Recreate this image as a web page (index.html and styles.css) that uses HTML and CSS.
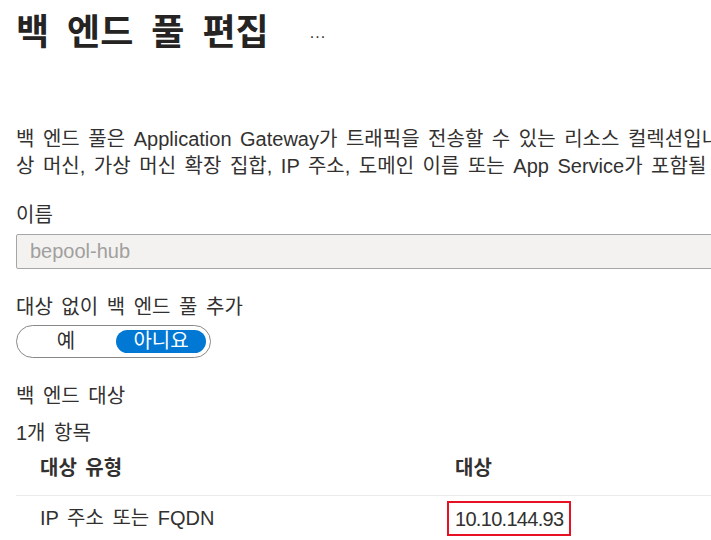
FILE: index.html
```html
<!DOCTYPE html>
<html lang="ko">
<head>
  <meta charset="UTF-8" />
  <title>백 엔드 풀 편집</title>
  <meta name="viewport" content="width=device-width, initial-scale=1" />
  <link rel="stylesheet" href="styles.css">
</head>
<body>
  <div class="pane">
    <div class="pane-header">
      <h1>백 엔드 풀 편집</h1>
      <span class="more">...</span>
    </div>

    <p class="intro">백 엔드 풀은 Application Gateway가 트래픽을 전송할 수 있는 리소스 컬렉션입니다. 백 엔드 풀에는 가<br>상 머신, 가상 머신 확장 집합, IP 주소, 도메인 이름 또는 App Service가 포함될 수 있습니다.</p>

    <div class="field">
      <label class="field-label">이름</label>
      <div class="text-input disabled">bepool-hub</div>
    </div>

    <div class="field field-toggle">
      <label class="field-label">대상 없이 백 엔드 풀 추가</label>
      <div class="toggle">
        <div class="toggle-option">예</div>
        <div class="toggle-option selected">아니요</div>
      </div>
    </div>

    <div class="section-title">백 엔드 대상</div>
    <div class="item-count">1개 항목</div>

    <div class="grid">
      <div class="grid-row grid-head">
        <div class="cell">대상 유형</div>
        <div class="cell">대상</div>
      </div>
      <div class="grid-row">
        <div class="cell">IP 주소 또는 FQDN</div>
        <div class="cell"><span class="highlight">10.10.144.93</span></div>
      </div>
    </div>
  </div>
</body>
</html>
```

FILE: styles.css
```css
:root {
  --text: #323130;
  --muted: #a19f9d;
  --primary: #0078d4;
  --line: #edebe9;
}

body {
  margin: 0;
  padding: 0;
  background: #fff;
  color: var(--text);
  font-family: "Liberation Sans", "Noto Sans CJK KR", sans-serif;
  font-size: 20px;
  word-spacing: 3px;
  overflow: hidden;
}

.pane {
  width: 1000px;
  padding-left: 16px;
}

.pane-header {
  display: flex;
  align-items: center;
  height: 58px;
  padding-top: 4px;
}

.pane-header h1 {
  margin: 0;
  font-size: 36px;
  font-weight: bold;
  word-spacing: 8px;
  line-height: 58px;
  color: #252423;
}

.more {
  margin-left: 41px;
  font-size: 16px;
  letter-spacing: 1px;
  color: var(--text);
}

.intro {
  margin: 64px 0 0;
  line-height: 27px;
  white-space: nowrap;
}

.field {
  margin-top: 22px;
}

.field-toggle {
  margin-top: 25px;
}

.field-label {
  display: block;
  line-height: 27px;
  margin-bottom: 5px;
}

.field-toggle .field-label {
  margin-bottom: 4px;
}

.text-input {
  box-sizing: border-box;
  height: 35px;
  border: 1px solid #a6a6a6;
  border-radius: 2px;
  padding: 0 13px;
  line-height: 33px;
}

.text-input.disabled {
  background: #f3f2f1;
  color: var(--muted);
}

.toggle {
  display: inline-flex;
  gap: 5px;
  padding: 4px;
  border: 1px solid #8a8886;
  border-radius: 17px;
}

.toggle-option {
  width: 90px;
  height: 23px;
  line-height: 23px;
  text-align: center;
  border-radius: 12px;
}

.toggle-option.selected {
  background: var(--primary);
  color: #fff;
}

.section-title {
  margin-top: 25px;
  line-height: 27px;
}

.item-count {
  margin-top: 10px;
  line-height: 27px;
}

.grid-row {
  display: grid;
  grid-template-columns: 415px 1fr;
  align-items: center;
  padding-left: 24px;
  line-height: 27px;
}

.grid-head {
  font-weight: bold;
  padding-top: 8px;
  padding-bottom: 13px;
  border-bottom: 1px solid var(--line);
}

.grid-row + .grid-row {
  padding-top: 5px;
}

.highlight {
  display: inline-block;
  margin-left: -8px;
  padding: 3px 6px 1px;
  letter-spacing: -0.7px;
  border: 2px solid #e81123;
}
```
